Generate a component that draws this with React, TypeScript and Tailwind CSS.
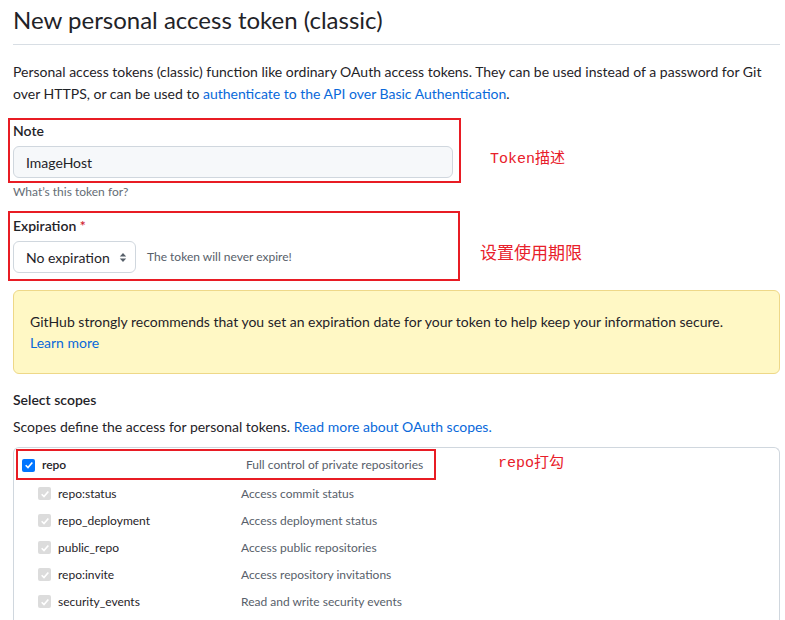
import { useState } from 'react';

const scopes = [
  { name: 'repo:status', desc: 'Access commit status' },
  { name: 'repo_deployment', desc: 'Access deployment status' },
  { name: 'public_repo', desc: 'Access public repositories' },
  { name: 'repo:invite', desc: 'Access repository invitations' },
  { name: 'security_events', desc: 'Read and write security events' },
];

const Check = ({ checked = true, muted = false }: { checked?: boolean; muted?: boolean }) => (
  <span
    className={`flex h-[13px] w-[13px] shrink-0 items-center justify-center rounded-[2px] ${
      muted ? 'bg-[#dcdcdc]' : 'bg-[#0075ff]'
    }`}
  >
    {checked && (
      <svg viewBox="0 0 12 12" className="h-[10px] w-[10px]">
        <path d="M2 6.3 4.8 9 10 3" fill="none" stroke="#fff" strokeWidth="2" />
      </svg>
    )}
  </span>
);

export default function App() {
  const [note, setNote] = useState('ImageHost');

  return (
    <div className="relative h-[620px] w-[785px] overflow-hidden bg-white pl-[13px] pr-[5px] font-['Lato',sans-serif] text-[#1f2328]">
      <h1 className="border-b border-[#d8dee4] pb-[8px] pt-[4px] text-[24px] leading-[32px] font-normal">
        New personal access token (classic)
      </h1>

      <p className="mt-[16px] text-[14px] leading-[22px]">
        Personal access tokens (classic) function like ordinary OAuth access tokens. They can be used instead of a password for Git
        over HTTPS, or can be used to{' '}
        <a className="text-[#0969da]">authenticate to the API over Basic Authentication</a>.
      </p>

      <div className="mt-[13px] flex items-start">
        <div className="-ml-[5px] w-[453px] border-2 border-[#e81c24] px-[3px] pb-[3px] pt-[1px]">
          <div className="text-[14px] leading-[20px] font-semibold">Note</div>
          <input
            value={note}
            onChange={(e) => setNote(e.target.value)}
            className="mt-[5px] h-[32px] w-[440px] rounded-[6px] border border-[#d0d7de] bg-[#f6f8fa] px-[12px] text-[14px] text-[#1f2328] outline-none"
          />
        </div>
        <span className="ml-[29px] mt-[31px] whitespace-nowrap font-['Liberation_Mono','Noto_Sans_CJK_SC',monospace] text-[15px] text-[#e8202a]">
          Token描述
        </span>
      </div>
      <div className="mt-[0px] text-[12px] leading-[18px] text-[#656d76]">What’s this token for?</div>

      <div className="mt-[10px] flex items-start">
        <div className="-ml-[5px] w-[452px] border-2 border-[#e81c24] px-[3px] pb-[6px] pt-[3px]">
          <div className="text-[14px] leading-[20px] font-semibold">
            Expiration <span className="text-[#cf222e]">*</span>
          </div>
          <div className="mt-[5px] flex items-center">
            <div className="flex h-[32px] w-[123px] items-center justify-between rounded-[6px] border border-[#d0d7de] pl-[12px] pr-[8px] text-[14px]">
              No expiration
              <svg viewBox="0 0 8 12" className="h-[11px] w-[8px]">
                <path d="M4 1 7.5 5h-7zM4 11 .5 7h7z" fill="#57606a" />
              </svg>
            </div>
            <span className="ml-[11px] text-[12px] text-[#57606a]">The token will never expire!</span>
          </div>
        </div>
        <span className="ml-[20px] mt-[28px] whitespace-nowrap font-['Noto_Sans_CJK_SC',sans-serif] text-[17px] text-[#e8202a]">
          设置使用期限
        </span>
      </div>

      <div className="mt-[9px] rounded-[6px] border border-[#eed888] bg-[#fff8c5] px-[16px] pb-[20px] pt-[20px] text-[14px] leading-[21px]">
        GitHub strongly recommends that you set an expiration date for your token to help keep your information secure.
        <div>
          <a className="text-[#0969da]">Learn more</a>
        </div>
      </div>

      <div className="mt-[16px] text-[14px] leading-[20px] font-semibold">Select scopes</div>
      <p className="mt-[7px] text-[14px] leading-[20px]">
        Scopes define the access for personal tokens.{' '}
        <a className="text-[#0969da]">Read more about OAuth scopes.</a>
      </p>

      <div className="mt-[10px] rounded-t-[6px] border border-b-0 border-[#d0d7de] pb-[20px]">
        <div className="flex items-start">
          <div className="ml-[2px] mt-[1px] flex h-[31px] w-[420px] items-center whitespace-nowrap border-2 border-[#e81c24] pl-[4px] pt-[1px]">
            <Check />
            <span className="ml-[7px] w-[204px] text-[12px] font-semibold">repo</span>
            <span className="text-[12px] text-[#57606a]">Full control of private repositories</span>
          </div>
          <span className="ml-[62px] mt-[5px] whitespace-nowrap font-['Liberation_Mono','Noto_Sans_CJK_SC',monospace] text-[15px] text-[#e8202a]">
            repo打勾
          </span>
        </div>
        {scopes.map((s) => (
          <div key={s.name} className="flex h-[27px] items-center whitespace-nowrap pl-[24px]">
            <Check muted />
            <span className="ml-[7px] w-[183px] text-[12px] text-[#1f2328]">{s.name}</span>
            <span className="text-[12px] text-[#57606a]">{s.desc}</span>
          </div>
        ))}
      </div>
    </div>
  );
}
